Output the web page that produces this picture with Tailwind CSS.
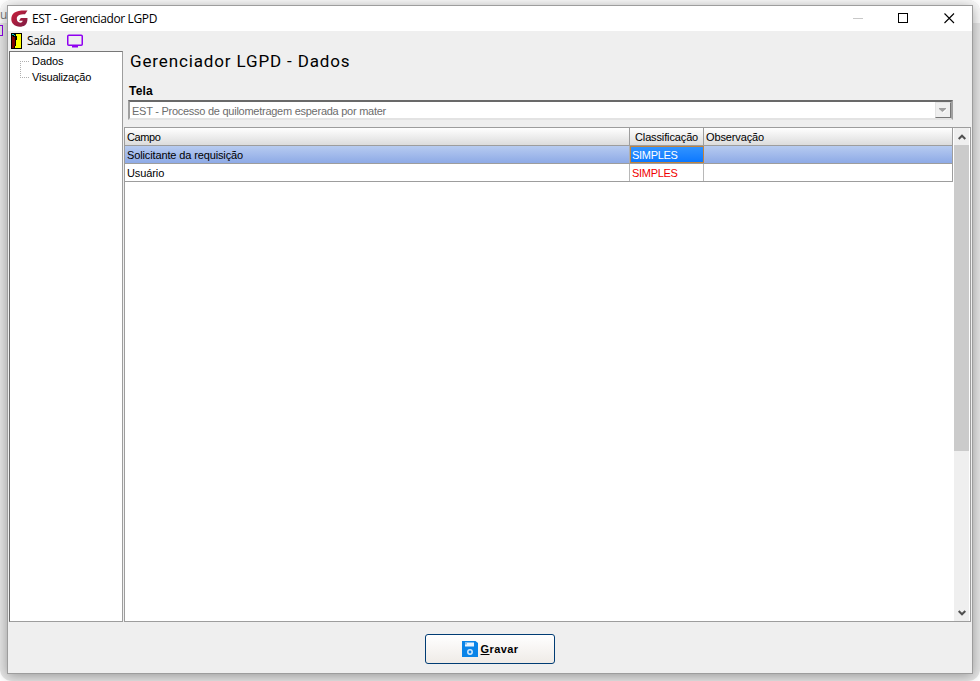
<!DOCTYPE html>
<html lang="pt-BR">
  <head>
    <meta charset="UTF-8" />
    <meta name="viewport" content="width=device-width, initial-scale=1.0" />
    <script src="https://cdn.jsdelivr.net/npm/@tailwindcss/browser@4"></script>
    <title>EST - Gerenciador LGPD</title>
  </head>
  <body class="relative h-[681px] w-[980px] overflow-hidden bg-white font-['Liberation_Sans',sans-serif] text-[11px] leading-[16px] tracking-[-0.13px] text-black">
    <!-- Page behind the window -->
    <div class="absolute inset-0 overflow-hidden rounded-xl bg-[#e6e6e6]">
      <div class="h-[23px] bg-[#fafafa]"></div>
      <span class="absolute top-[7px] left-0 font-['Open_Sans',sans-serif] text-[12px] text-[#777]">u:</span>
      <div class="absolute top-[25px] -left-[6px] h-[11px] w-[9px] border border-[#8a00e6]"></div>
    </div>

    <!-- Window -->
    <div class="relative mt-[5px] ml-[7px] flex h-[669px] w-[966px] flex-col border border-[#9d9d9d] bg-[#efefef] shadow-[0_2px_12px_rgba(0,0,0,0.35)]">
      <header class="flex h-[25px] shrink-0 items-center bg-white pl-[3px]">
        <svg class="h-[17px] w-[17px]" viewBox="0 0 17 17">
          <defs>
            <linearGradient id="logo" x1="0" y1="0" x2="1" y2="1">
              <stop offset="0" stop-color="#cc203c" />
              <stop offset="1" stop-color="#7c1c44" />
            </linearGradient>
          </defs>
          <path fill="url(#logo)" d="M16.500.5C12 .2 6.500.3 3.200 2.800-.3 5.500-.6 11 2.200 14c2.800 3.200 8.500 3.500 11.800 1.200 1.900-1.400 2.500-3.800 2.500-7.200H9.800L8 10.800h3.800c-.3 1.300-1.300 1.900-2.500 1.900-2.200 0-3.500-1.700-3.500-3.900C5.800 5.500 8.500 4.300 14 4.300z" />
        </svg>
        <h1 class="ml-[4px] font-['Open_Sans',sans-serif] text-[12px] leading-[14px] tracking-[-0.38px]">EST - Gerenciador LGPD</h1>
        <svg class="mr-[17px] ml-auto h-[11px] w-[103px]" viewBox="0 0 103 11" fill="none" shape-rendering="crispEdges">
          <path stroke="#c8c8c8" d="M1 5.500h10" />
          <path stroke="#000" d="M46.500.5h9v9h-9z" />
          <path stroke="#000" shape-rendering="auto" stroke-width="1.100" d="M92.500.5l9.500 9.500M102 .5L92.500 10" />
        </svg>
      </header>

      <nav class="flex h-[20px] shrink-0 items-center pl-[3px]">
        <svg class="h-[16px] w-[11px]" viewBox="0 0 11 16" shape-rendering="crispEdges">
          <path fill="#000" d="M0 0h11v16H0z" />
          <path fill="#ff0" d="M5 1h5v14H4v-2h1z" />
          <path fill="#800000" d="M1 3h1v1h2v9H3v2H1z" />
          <path fill="#0cc" d="M1 1h2v1H1zM3 2h1v1H3z" />
          <path fill="#000" d="M5 3h1v4H5z" />
        </svg>
        <span class="ml-[5px] font-['Open_Sans',sans-serif] text-[12px] tracking-[-0.4px]">Saída</span>
        <svg class="ml-[11px] h-[14px] w-[18px]" viewBox="0 0 18 14" fill="none">
          <rect x="1.750" y="1.250" width="14.500" height="10" rx="1" stroke="#8f00f0" stroke-width="1.500" />
          <path fill="#8f00f0" d="M6 11h6v2.500H6z" />
        </svg>
      </nav>

      <div class="flex h-[571px] shrink-0 pl-px">
        <!-- Tree -->
        <aside class="relative w-[114px] shrink-0 border border-[#9d9d9d] border-t-[#777] border-l-[#696969] bg-white pt-px">
          <svg class="absolute top-[9px] left-[10px] h-[18px] w-[9px]" viewBox="0 0 9 18" fill="none" shape-rendering="crispEdges">
            <path stroke="#b0b0b0" stroke-dasharray="1 1" d="M0 .5h9M.5 0v17M0 16.500h9" />
          </svg>
          <ul class="pl-[22px]">
            <li class="h-[16px] tracking-[-0.05px]">Dados</li>
            <li class="h-[16px] tracking-[-0.2px]">Visualização</li>
          </ul>
        </aside>

        <main class="ml-px flex w-[847px] flex-col">
          <div class="h-[76px] shrink-0 pl-[4px]">
            <h2 class="h-[31px] pl-[2px] font-['Roboto',sans-serif] text-[17px] leading-[21px] tracking-[0.86px]">Gerenciador LGPD - Dados</h2>
            <label class="block h-[18px] pt-px pl-px text-[12px] leading-[17px] font-bold tracking-[0.2px]">Tela</label>
            <div class="flex h-[20px] w-[825px] items-center border-2 border-[#a0a0a0] border-t-[#696969] border-r-[#a0a0a0] border-b-[#e3e3e3] bg-white pl-[2px] text-[#6d6d6d]">
              <span id="tela" class="pt-[2px] tracking-[-0.26px]">EST - Processo de quilometragem esperada por mater</span>
              <div class="ml-auto flex h-[16px] w-[16px] items-center justify-center border border-[#e3e3e3] border-r-[#777] border-b-[#777] bg-[#efefef]">
                <svg class="h-[5px] w-[8px]" viewBox="0 0 8 5"><path fill="#fff" d="M1 1h7L4.500 5z" /><path fill="#a0a0a0" d="M0 0h7v1L3.500 4 0 1z" /></svg>
              </div>
            </div>
          </div>

          <div class="flex h-[495px] shrink-0 border border-[#9d9d9d] bg-white">
            <div class="w-[828px]">
              <div class="grid h-[18px] grid-cols-[505px_74px_249px] grid-rows-[17px] border-r border-b border-[#9d9d9d] bg-linear-to-b from-white to-[#dcdcdc] leading-[18px]">
                <div class="border-r border-[#9d9d9d] pl-[2px] tracking-[-0.4px]">Campo</div>
                <div class="border-r border-[#9d9d9d] pl-[5px]">Classificação</div>
                <div class="pl-[2px]">Observação</div>
              </div>
              <div class="grid h-[18px] grid-cols-[505px_74px_249px] grid-rows-[17px] border-r border-b border-[#9d9d9d] bg-linear-to-b from-[#b7cbf0] to-[#8eaae6] leading-[18px]">
                <div class="border-r border-[#b0b0b0] pl-[2px]">Solicitante da requisição</div>
                <div class="border border-[#c08440] bg-linear-to-b from-[#3093ff] to-[#0a78ff] pl-px leading-[16px] tracking-[-0.3px] text-white">SIMPLES</div>
                <div></div>
              </div>
              <div class="grid h-[18px] grid-cols-[505px_74px_249px] grid-rows-[17px] border-r border-b border-[#9d9d9d] leading-[18px]">
                <div class="border-r border-[#b8b8b8] pl-[2px] tracking-[-0.1px]">Usuário</div>
                <div class="border-r border-[#b8b8b8] pl-[2px] tracking-[-0.3px] text-[#f00000]">SIMPLES</div>
                <div></div>
              </div>
            </div>
            <!-- Scrollbar -->
            <div class="ml-px flex w-[15px] flex-col bg-[#efefef]">
              <div class="flex h-[17px] items-center justify-center">
                <svg class="h-[6px] w-[8px]" viewBox="0 0 8 6" fill="none"><path stroke="#505050" stroke-width="2" d="M.7 5L4 1.700 7.300 5" /></svg>
              </div>
              <div class="h-[306px] bg-[#cbcbcb]"></div>
              <div class="mt-auto flex h-[17px] items-center justify-center">
                <svg class="h-[6px] w-[8px]" viewBox="0 0 8 6" fill="none"><path stroke="#505050" stroke-width="2" d="M.7 1L4 4.300 7.300 1" /></svg>
              </div>
            </div>
          </div>
        </main>
      </div>

      <footer class="flex justify-center pt-[12px]">
        <button class="flex h-[30px] w-[130px] items-center justify-center rounded-[3px] border border-[#003c74] bg-linear-to-b from-white to-[#efebe7] text-[11px] font-bold tracking-[0.4px]">
          <svg class="mr-[3px] h-[16px] w-[16px]" viewBox="0 0 16 16">
            <path fill="#0a84e8" d="M0 0h13.500L16 2v14H0z" />
            <path fill="#e8f4ff" d="M3 1.500h9v4H3z" />
            <path fill="#7fbdf2" d="M3 1.500h2v2H3z" />
            <circle cx="8" cy="11" r="2.200" fill="none" stroke="#d4eaff" stroke-width="1.500" />
          </svg>
          <span><u>G</u>ravar</span>
        </button>
      </footer>
    </div>
  </body>
</html>
